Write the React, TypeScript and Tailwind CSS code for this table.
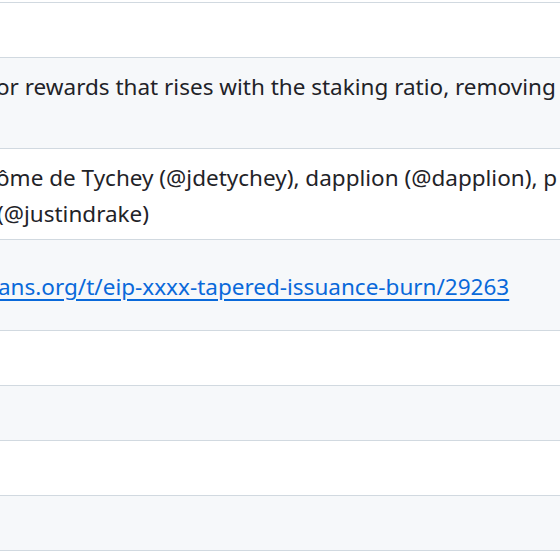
import React from "react";

const font = { fontFamily: '"Noto Sans", "Open Sans", sans-serif' };

function Row({ gray, children, tall }: { gray?: boolean; children?: React.ReactNode; tall?: boolean }) {
  return (
    <div
      className={`border-t border-[#d1d9e0] pt-[11px] pb-[7px] ${gray ? "bg-[#f6f8fa]" : "bg-white"} ${tall ? "h-[91px]" : "h-[55px]"} flex flex-col justify-center`}
    >
      {children}
    </div>
  );
}

export default function App() {
  return (
    <div className="w-[560px] h-[555px] overflow-hidden bg-white pt-[2px] text-[22.5px] leading-[36px] text-[#1f2328]" style={font}>
      <Row />
      <Row gray tall>
        <div className="flex-1 flex flex-col justify-start">
          <div className="whitespace-nowrap -ml-[4px]">or rewards that rises with the staking ratio, removing t</div>
        </div>
      </Row>
      <Row tall>
        <div className="whitespace-nowrap -ml-[4px]">ôme de Tychey (@jdetychey), dapplion (@dapplion), p</div>
        <div className="whitespace-nowrap -ml-[3px]">(@justindrake)</div>
      </Row>
      <Row gray tall>
        <div className="whitespace-nowrap -ml-[2px]">
          <a href="#" className="text-[#0969da] underline underline-offset-[4px]">ans.org/t/eip-xxxx-tapered-issuance-burn/29263</a>
        </div>
      </Row>
      <Row />
      <Row gray />
      <Row />
      <Row gray />
      <div className="border-t border-[#d1d9e0] h-[5px] bg-white" />
    </div>
  );
}
